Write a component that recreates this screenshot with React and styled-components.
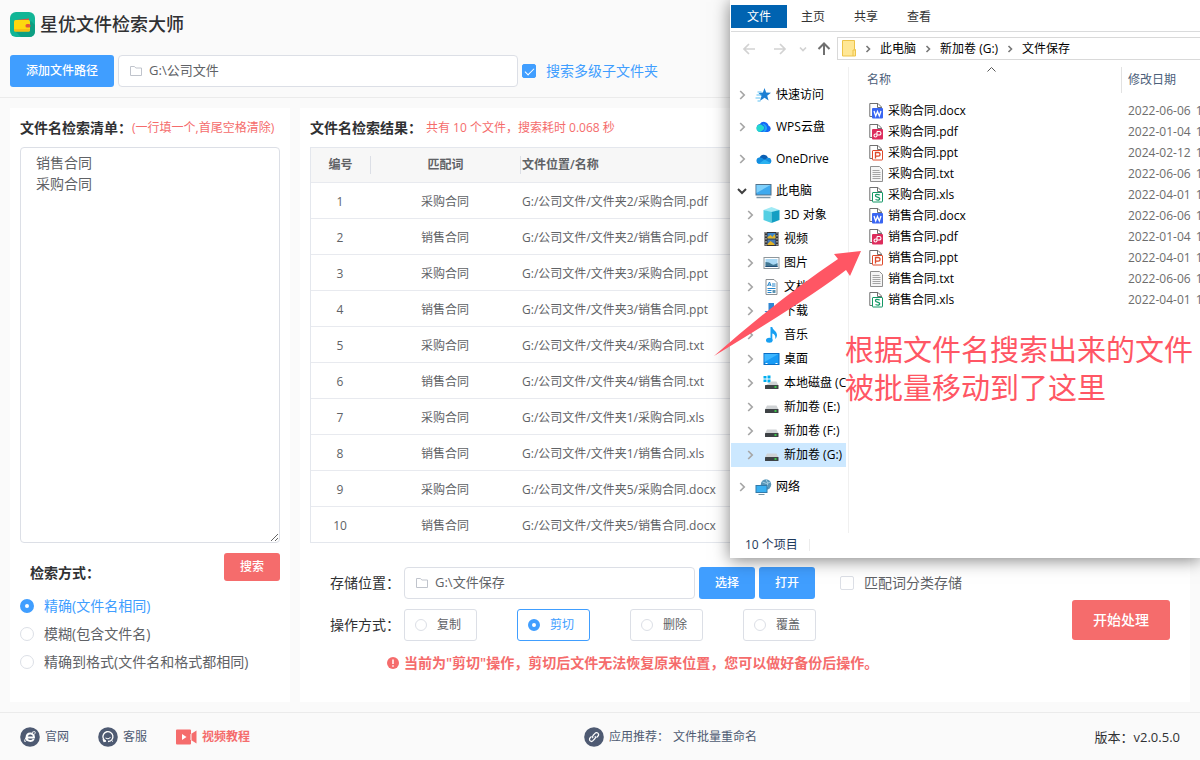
import React from "react";
import styled, { createGlobalStyle, css } from "styled-components";

const GlobalStyle = createGlobalStyle`
  * { box-sizing: border-box; }
  body {
    margin: 0;
    background: #fafafa;
    color: #606266;
    font-family: "Open Sans", "Noto Sans CJK SC", sans-serif;
    font-size: 12px;
    line-height: 20px;
  }
  button, input, textarea { font: inherit; color: inherit; margin: 0; }
  a { color: inherit; text-decoration: none; }
`;

const Page = styled.div`
  position: relative;
  display: flex;
  flex-direction: column;
  min-height: 100vh;
  overflow: hidden;
`;

const TopBar = styled.header`
  display: flex;
  flex-direction: column;
  gap: 18px;
  padding: 12px 10px 10px;
  border-bottom: 1px solid #ebebeb;
`;

const Brand = styled.div`
  display: flex;
  align-items: center;
  gap: 5px;
  height: 25px;
`;

const Title = styled.h1`
  margin: 0;
  padding-bottom: 2px;
  font-size: 18px;
  font-weight: 500;
  line-height: 24px;
  color: #303133;
`;

const Toolbar = styled.div`
  display: flex;
  align-items: center;
  gap: 4px;
`;

const buttonColors = { primary: "#409eff", danger: "#f56c6c" };

const Button = styled.button`
  border: 0;
  border-radius: 3px;
  color: #fff;
  background: ${(p) => buttonColors[p.$kind]};
  font-size: ${(p) => (p.$size === "large" ? 14 : 12)}px;
  font-weight: 500;
  height: ${(p) => ({ small: 28, medium: 32, large: 40 })[p.$size]}px;
  padding: 0 ${(p) => (p.$size === "large" ? 21 : 16)}px;
  white-space: nowrap;
`;

const PathBox = styled.label`
  display: flex;
  align-items: center;
  gap: 7px;
  width: ${(p) => p.$width}px;
  height: 32px;
  padding: 0 11px;
  border: 1px solid #dcdfe6;
  border-radius: 4px;
  background: #fff;
`;

const PathInput = styled.input`
  flex: 1;
  min-width: 0;
  padding: 0 0 2px;
  border: 0;
  outline: 0;
  background: transparent;
  font-size: 13px;
`;

const Choice = styled.label`
  display: flex;
  align-items: center;
  gap: 10px;
  font-size: 14px;
  white-space: nowrap;
  color: ${(p) => (p.$on ? "#409eff" : "#606266")};
`;

const SearchChoice = styled(Choice)`
  height: 28px;
`;

const MatchChoice = styled(Choice)`
  margin-left: 21px;
`;

const Check = styled.input`
  appearance: none;
  display: grid;
  place-items: center;
  width: 14px;
  height: 14px;
  border: 1px solid #dcdfe6;
  border-radius: 2px;
  background: #fff;
  &:checked {
    border-color: #409eff;
    background: #409eff;
  }
  &:checked::after {
    content: "";
    width: 4px;
    height: 8px;
    margin-bottom: 2px;
    border: solid #fff;
    border-width: 0 1px 1px 0;
    transform: rotate(45deg);
  }
`;

const Radio = styled.input`
  appearance: none;
  width: ${(p) => p.$size}px;
  height: ${(p) => p.$size}px;
  border: 1px solid #dcdfe6;
  border-radius: 50%;
  background: #fff;
  &:checked {
    border: ${(p) => (p.$size > 12 ? 5 : 4)}px solid #409eff;
  }
`;

const Main = styled.main`
  flex: 1;
  display: flex;
  gap: 10px;
  padding: 10px;
`;

const Panel = styled.section`
  display: flex;
  flex-direction: column;
  background: #fff;
  padding: 10px 10px 26px;
`;

const ListPanel = styled(Panel)`
  flex: 0 0 280px;
`;

const ResultPanel = styled(Panel)`
  flex: 1;
  min-width: 0;
  padding-bottom: 29px;
`;

const PanelHead = styled.div`
  display: flex;
  align-items: center;
  margin-bottom: 9px;
  white-space: nowrap;
`;

const Heading = styled.h2`
  margin: 0;
  font-size: 14px;
  font-weight: 600;
  line-height: 20px;
  color: #303133;
`;

const Hint = styled.span`
  color: #f56c6c;
  margin-left: ${(p) => p.$gap || 0}px;
`;

const NameList = styled.textarea`
  flex: 1;
  width: 100%;
  min-height: 396px;
  padding: 4px 15px;
  border: 1px solid #dcdfe6;
  border-radius: 4px;
  outline: 0;
  resize: vertical;
  background: #fff;
  font-size: 14px;
  line-height: 21px;
`;

const SearchRow = styled.div`
  display: flex;
  justify-content: space-between;
  margin: 10px 0 9px;
  padding-left: 10px;
  ${Heading} { padding-top: 10px; }
`;

const TableBox = styled.div`
  flex: 1 0 396px;
  height: 396px;
  overflow: hidden;
  border: 1px solid #e4e7ed;
`;

const ResultTable = styled.table`
  width: 100%;
  border-collapse: separate;
  border-spacing: 0;
  table-layout: fixed;
  col:nth-child(1) { width: 60px; }
  col:nth-child(2) { width: 150px; }
  th, td {
    height: 36px;
    padding: 0;
    border-bottom: 1px solid #e8eaef;
    text-align: center;
  }
  td { padding: 2px 2px 0 0; }
  th {
    height: 35px;
    background: #f7f7f7;
    font-weight: 600;
  }
  th:nth-child(3), td:nth-child(3) {
    text-align: left;
    padding-left: 1px;
  }
`;

const HeadLabel = styled.div`
  line-height: 18px;
  border-right: ${(p) => (p.$last ? "0" : "1px solid #dcdfe6")};
`;

const Form = styled.form`
  display: flex;
  align-items: center;
  justify-content: space-between;
  margin-top: 24px;
  padding: 0 10px 0 20px;
`;

const FormRow = styled.div`
  display: flex;
  align-items: center;
  gap: ${(p) => p.$gap}px;
  margin-bottom: 10px;
`;

const FormLabel = styled.span`
  width: ${(p) => p.$width}px;
  font-size: 14px;
  color: #303133;
  white-space: nowrap;
`;

const Modes = styled.div`
  display: flex;
  gap: 40px;
`;

const Mode = styled.label`
  display: flex;
  align-items: center;
  gap: 10px;
  width: 73px;
  height: 32px;
  padding-left: 10px;
  border: 1px solid ${(p) => (p.$on ? "#409eff" : "#dcdfe6")};
  border-radius: 3px;
  color: ${(p) => (p.$on ? "#409eff" : "#606266")};
`;

const Warning = styled.p`
  display: flex;
  align-items: center;
  gap: 5px;
  margin: 12px 0 0;
  padding-left: 57px;
  color: #f56c6c;
  font-size: 14px;
  font-weight: 600;
  white-space: nowrap;
`;

const Footer = styled.footer`
  display: flex;
  align-items: center;
  justify-content: space-between;
  height: 48px;
  padding: 0 20px;
  border-top: 1px solid #ebebeb;
`;

const FootGroup = styled.nav`
  display: flex;
  align-items: center;
  gap: ${(p) => p.$gap}px;
  flex: ${(p) => p.$flex || "0 0 auto"};
  justify-content: ${(p) => p.$align || "flex-start"};
`;

const FootLink = styled.a`
  display: flex;
  align-items: center;
  gap: 5px;
  color: ${(p) => (p.$hot ? "#f56c6c" : "#4e5a72")};
  font-weight: ${(p) => (p.$hot ? 600 : 400)};
`;

const Version = styled.span`
  font-size: 13px;
  color: #303133;
`;

/* File manager window floating over the application */
const Explorer = styled.aside`
  position: absolute;
  top: 0;
  left: 730px;
  right: 0;
  display: flex;
  flex-direction: column;
  height: 558px;
  padding-left: 1px;
  background: #fff;
  color: #000;
  box-shadow: 0 2px 16px rgba(0, 0, 0, 0.5);
`;

const Tabs = styled.div`
  display: flex;
  padding: 5px 0 3px;
  border-bottom: 1px solid #dadbdc;
`;

const Tab = styled.button`
  border: 0;
  height: 23px;
  padding: ${(p) => (p.$on ? "0 16px" : "0 15px 0 14px")};
  color: ${(p) => (p.$on ? "#fff" : "#333")};
  background: ${(p) => (p.$on ? "#0063b1" : "transparent")};
`;

const AddressRow = styled.div`
  display: flex;
  align-items: center;
  padding-top: 5px;
`;

const NavButtons = styled.div`
  display: flex;
  width: 106px;
  padding-left: 11px;
`;

const Address = styled.div`
  flex: 1;
  display: flex;
  align-items: center;
  gap: 8px;
  height: 23px;
  padding-left: 4px;
  border: 1px solid #d9d9d9;
  border-right: 0;
  white-space: nowrap;
`;

const Body = styled.div`
  display: flex;
  margin-top: 7px;
  height: 466px;
`;

const Tree = styled.ul`
  flex: 0 0 118px;
  min-width: 0;
  margin: 0;
  padding: 16px 2px 0 0;
  border-right: 1px solid #f0f0f0;
  list-style: none;
`;

const TreeItem = styled.li`
  display: flex;
  align-items: center;
  height: 24px;
  margin-top: ${(p) => (p.$gap ? 8 : 0)}px;
  padding-left: ${(p) => (p.$child ? 14 : 6)}px;
  background: ${(p) => (p.$on ? "#cce8ff" : "transparent")};
  white-space: nowrap;
  overflow: hidden;
  svg { flex: none; }
  span { margin-left: 4px; }
`;

const Arrow = styled.svg`
  width: 10px;
  height: 10px;
  margin-right: ${(p) => p.$space || 0}px;
`;

const FileTable = styled.table`
  flex: 1;
  align-self: flex-start;
  border-spacing: 0;
  table-layout: fixed;
  width: 0;
  min-width: 0;
  col:nth-child(1) { width: 273px; }
  th {
    height: 33px;
    padding: 0;
    font-weight: 400;
    text-align: left;
    color: #4c607a;
    vertical-align: top;
  }
  td {
    height: 21px;
    padding: 0 0 0 20px;
    white-space: nowrap;
    overflow: hidden;
  }
  td + td { padding-left: 6px; color: #6d6d6d; }
  td + td span { margin-left: 5px; }
`;

const ColumnHead = styled.div`
  display: flex;
  justify-content: space-between;
  height: 26px;
  line-height: 26px;
  padding-left: ${(p) => (p.$first ? 18 : 6)}px;
  ${(p) => p.$first && css`border-right: 1px solid #e2e2e2;`}
`;

const SortMark = styled.svg`
  width: 9px;
  height: 5px;
  margin-right: 125px;
`;

const FileName = styled.div`
  display: flex;
  align-items: center;
  gap: 4px;
  line-height: 21px;
`;

const Status = styled.div`
  width: 65px;
  margin: 6px 0 0 14px;
  line-height: 12px;
  border-right: 1px solid #ececec;
  color: #1e395b;
`;

const Callout = styled.p`
  position: absolute;
  top: 331px;
  left: 845px;
  margin: 0;
  color: #ff5664;
  font-size: 29px;
  line-height: 38px;
  white-space: nowrap;
`;

const Pointer = styled.svg`
  position: absolute;
  top: 240px;
  left: 710px;
  width: 160px;
  height: 120px;
`;

const Logo = () => (
  <svg width="25" height="25" viewBox="0 0 25 25">
    <rect width="25" height="25" rx="6" fill="#11b596" />
    <path d="M21 9 25 13V19Q25 25 19 25H11L5 19Z" fill="#0d9f83" />
    <path d="M6 8 19 6.500V9H5Z" fill="#e5533c" />
    <rect x="4" y="8" width="16" height="11.500" rx="1.500" fill="#fdd80f" />
    <path d="M4 17h16v1a1.500 1.500 0 0 1-1.500 1.500h-13A1.500 1.500 0 0 1 4 18z" fill="#f7bd12" />
    <rect x="15.500" y="12" width="5" height="3.500" rx="1.500" fill="#e5533c" />
  </svg>
);

const FolderOutline = () => (
  <svg width="12" height="12" viewBox="0 0 12 12" fill="none" stroke="#c0c4cc">
    <path d="M.5 1.500h4l1.300 1.500h5.700v7.500H.5z" />
  </svg>
);

const Chevron = ({ open, color, space }) => (
  <Arrow $space={space} viewBox="0 0 10 10" fill="none" stroke={color || (open ? "#404040" : "#a6a6a6")} strokeWidth={open ? 2 : 1.700}>
    <path d={open ? "M1 3l4 4 4-4" : "M3.200 1l4 4-4 4"} />
  </Arrow>
);

const Crumb = () => (
  <svg width="8" height="8" viewBox="0 0 8 8" fill="none" stroke="#777" strokeWidth="1.600">
    <path d="M2.500 1l3 3-3 3" />
  </svg>
);

const Drive = ({ windows }) => (
  <>
    {windows && <path d="M0 1h3v2.500H0zM4 .5h3v3H4zM0 4.500h3V7H0zM4 4.500h3v3H4z" fill="#00adef" />}
    <path d={windows ? "M8 6.500h5l2 4H2z" : "M3.500 6.500h9.500l2 4H1.500z"} fill="#cfd2d4" />
    <rect x="1.500" y="10" width="13.500" height="4" rx=".5" fill="#3e4245" />
    <path d="M11 12h2" stroke="#3df04a" strokeWidth="1.500" />
  </>
);

const treeArt = {
  star: (
    <>
      <path d="M9 1l1.700 4.600 4.800.2-3.800 3 1.400 4.800L9 10.800l-4.500 3 1.500-4.900L3 6l4.400-.4z" fill="#1d7fd3" />
      <path d="M1 8h5M0 11h5M2 14h3M2 5h4" stroke="#5fc2f4" strokeWidth="1.200" />
    </>
  ),
  cloud: (
    <>
      <path d="M5 13a4 4 0 0 1-.6-7.900A4.700 4.700 0 0 1 13 6.500a3.400 3.400 0 0 1-.5 6.500z" fill="#1468f5" />
      <path d="M4.500 13a3.700 3.700 0 1 1 3-6c2.500 1 1 5-3 6z" fill="#25d8ce" />
      <path d="M7 5.500c3 1 3 5 0 7.500h2c4-2 3-7-1-8.500z" fill="#20a8f5" />
    </>
  ),
  onedrive: (
    <>
      <path d="M4 7a4.500 4.500 0 0 1 8.500-.6L9 10z" fill="#0a5fb4" />
      <path d="M3.500 13A3.300 3.300 0 0 1 4 6.500c2 0 3.500.8 5 2.500l3-2a3 3 0 0 1 1.500 6z" fill="#138ee0" />
      <path d="M3 13l6-4.500 6 3.500q-.8 1-2 1z" fill="#2ab1f0" />
    </>
  ),
  pc: (
    <>
      <rect x=".5" y="1.500" width="15" height="10.500" fill="#3fa9ee" stroke="#52718a" />
      <path d="M1 2h14L1 10z" fill="#7fd0fb" />
      <path d="M1 14.500h14" stroke="#7d97a8" strokeWidth="1.500" />
    </>
  ),
  cube: (
    <>
      <path d="M0 3l8-3 8 3-8 3z" fill="#a0eaf5" />
      <path d="M0 3l8 2v11l-8-3z" fill="#54cfe3" />
      <path d="M16 3l-8 2v11l8-3z" fill="#139fc3" />
    </>
  ),
  video: (
    <>
      <rect x="1" y="1" width="14" height="14" fill="#333" />
      <rect x="4" y="2" width="8" height="5.500" fill="#3d85c9" />
      <rect x="4" y="8.500" width="8" height="5.500" fill="#4779b4" />
      <path d="M4 6l3-2 2 2 2-3 1 3v1.500H4zM4 13l3-3 4 3v1H4z" fill="#e5b425" />
      <path d="M2.500 1v14M13.500 1v14" stroke="#ddd" strokeDasharray="1.500 1.500" />
    </>
  ),
  image: (
    <>
      <rect x=".5" y="2.500" width="15" height="11" fill="#fff" stroke="#8e979c" />
      <rect x="2" y="4" width="12" height="8" fill="#a9d8f4" />
      <path d="M2 7q4 0 6 2t6-1v4H2z" fill="#427793" />
      <path d="M2 11h12v1H2z" fill="#234f79" />
    </>
  ),
  doc: (
    <>
      <path d="M2.500.5h8l3 3v12h-11z" fill="#fff" stroke="#8a8f93" />
      <path d="M4 7l2-4 1.500 4M4.500 6H7M8.500 5H12M8.500 7H12M4 9.500h8M4 11.500h4M4 13.500h4" stroke="#2384ca" fill="none" />
      <path d="M9 11h3v3H9z" fill="#5a92b1" />
    </>
  ),
  download: <path d="M5 0h5.500v8H14l-6 7-7-7h4z" fill="#2f86d4" />,
  music: (
    <>
      <path d="M7 0h1.800c.2 3 4.700 4.200 4.700 8 0 1.700-.7 3-1.700 4 .5-3.500-.8-5-3-5.500V13H7z" fill="#18a0f2" />
      <ellipse cx="5.800" cy="13.200" rx="3.300" ry="2.500" fill="#18a0f2" />
    </>
  ),
  desktop: (
    <>
      <rect x=".5" y="2.500" width="15" height="11" fill="#189bf5" stroke="#0a6dc3" />
      <path d="M1 3h14L1 11z" fill="#3db6ff" />
      <path d="M2 12.500h2M12 12.500h2" stroke="#fff" />
    </>
  ),
  system: <Drive windows />,
  drive: <Drive />,
  network: (
    <>
      <circle cx="10.500" cy="5.500" r="5.200" fill="#5896b8" />
      <path d="M7 3q4 3 8 0M10.500 0q3 5 1 8" stroke="#a6d0e4" fill="none" />
      <rect x=".5" y="6.500" width="11" height="7" fill="#3ab0f1" stroke="#337aa9" />
      <path d="M3 15.500h6" stroke="#7594a5" />
    </>
  ),
};

const TreeIcon = ({ name }) => (
  <svg width="17" height="16" viewBox="0 0 16 16">{treeArt[name]}</svg>
);

const fileArt = {
  docx: (
    <>
      <rect x="3" y="5" width="11" height="10.500" rx="1" fill="#3965f2" />
      <path d="M5 8l1.700 5L8.500 8.500 10.300 13 12 8" stroke="#fff" strokeWidth="1.300" fill="none" />
    </>
  ),
  pdf: (
    <>
      <rect x="3" y="5" width="11" height="10.500" rx="1" fill="#dd2c5c" />
      <path d="M8 7.500h2.200a1.700 1.700 0 0 1 0 3.500H8v-3.500M8 10.500v1a1.500 1.500 0 1 1-1.500-1.500H8" stroke="#fff" strokeWidth="1.100" fill="none" />
    </>
  ),
  ppt: (
    <>
      <rect x="3.500" y="5.500" width="10" height="9.500" rx=".5" fill="#fff" stroke="#de4a2b" />
      <path d="M6.500 13.500v-6h2.700a1.700 1.700 0 0 1 0 3.700H6.500" stroke="#de4a2b" strokeWidth="1.300" fill="none" />
    </>
  ),
  xls: (
    <>
      <rect x="3.500" y="5.500" width="10" height="9.500" rx=".5" fill="#fff" stroke="#149866" />
      <path d="M10.800 8Q6.500 6.500 6.500 8.700q0 1 2 1.500t2.200 1.500q0 2.200-4.200.8" stroke="#149866" strokeWidth="1.300" fill="none" />
    </>
  ),
};

const FileIcon = ({ type }) => (
  <svg width="15" height="16" viewBox="0 0 15 16">
    {type === "txt" ? (
      <>
        <path d="M1.500.5h9l3 3v12h-12z" fill="#f5f5f5" stroke="#8f8f8f" />
        <path d="M3.500 4.500h7M3.500 6.500h8M3.500 8.500h8M3.500 10.500h8M3.500 12.500h8" stroke="#a5a5a5" />
      </>
    ) : (
      <>
        <path d="M3 13.500H.8V.5H9l3.500 3.500v2M8.500.5v4h4" fill="#fff" stroke="#707070" />
        {fileArt[type]}
      </>
    )}
  </svg>
);

const Disc = ({ children }) => (
  <svg width="20" height="20" viewBox="0 0 20 20" fill="none" stroke="#fff">
    <circle cx="10" cy="10" r="9.800" fill="#4e5a72" stroke="none" />
    {children}
  </svg>
);

const results = [
  ["采购合同", "文件夹2/采购合同.pdf"],
  ["销售合同", "文件夹2/销售合同.pdf"],
  ["采购合同", "文件夹3/采购合同.ppt"],
  ["销售合同", "文件夹3/销售合同.ppt"],
  ["采购合同", "文件夹4/采购合同.txt"],
  ["销售合同", "文件夹4/销售合同.txt"],
  ["采购合同", "文件夹1/采购合同.xls"],
  ["销售合同", "文件夹1/销售合同.xls"],
  ["采购合同", "文件夹5/采购合同.docx"],
  ["销售合同", "文件夹5/销售合同.docx"],
];

const files = [
  ["采购合同", "docx", "2022-06-06"],
  ["采购合同", "pdf", "2022-01-04"],
  ["采购合同", "ppt", "2024-02-12"],
  ["采购合同", "txt", "2022-06-06"],
  ["采购合同", "xls", "2022-04-01"],
  ["销售合同", "docx", "2022-06-06"],
  ["销售合同", "pdf", "2022-01-04"],
  ["销售合同", "ppt", "2022-04-01"],
  ["销售合同", "txt", "2022-06-06"],
  ["销售合同", "xls", "2022-04-01"],
];

const tree = [
  { icon: "star", name: "快速访问" },
  { icon: "cloud", name: "WPS云盘", gap: true },
  { icon: "onedrive", name: "OneDrive", gap: true },
  { icon: "pc", name: "此电脑", gap: true, open: true },
  { icon: "cube", name: "3D 对象", child: true },
  { icon: "video", name: "视频", child: true },
  { icon: "image", name: "图片", child: true },
  { icon: "doc", name: "文档", child: true },
  { icon: "download", name: "下载", child: true },
  { icon: "music", name: "音乐", child: true },
  { icon: "desktop", name: "桌面", child: true },
  { icon: "system", name: "本地磁盘 (C:)", child: true },
  { icon: "drive", name: "新加卷 (E:)", child: true },
  { icon: "drive", name: "新加卷 (F:)", child: true },
  { icon: "drive", name: "新加卷 (G:)", child: true, on: true },
  { icon: "network", name: "网络", gap: true },
];

const searchModes = ["精确(文件名相同)", "模糊(包含文件名)", "精确到格式(文件名和格式都相同)"];
const actions = ["复制", "剪切", "删除", "覆盖"];

function ExplorerWindow() {
  return (
    <Explorer>
      <Tabs>
        {["文件", "主页", "共享", "查看"].map((t, i) => (
          <Tab key={t} type="button" $on={i === 0}>{t}</Tab>
        ))}
      </Tabs>
      <AddressRow>
        <NavButtons>
          <svg width="90" height="16" viewBox="0 0 90 16" fill="none" strokeWidth="1.700" stroke="#d2d2d2">
            <path d="M13 8H2M7 3L2 8l5 5M32 8h11M38 3l5 5-5 5M58 6.500l3 3 3-3" />
            <path d="M82 14V3M76.500 8L82 2.500 87.500 8" stroke="#707070" strokeWidth="2" />
          </svg>
        </NavButtons>
        <Address>
          <svg width="14" height="17" viewBox="0 0 14 17">
            <path d="M.5.5h12v9h1v6.500H.5z" fill="#ffe795" stroke="#edc349" />
            <path d="M11 16V10h2" stroke="#edc349" fill="none" />
          </svg>
          <Crumb />
          <span>此电脑</span>
          <Crumb />
          <span>新加卷 (G:)</span>
          <Crumb />
          <span>文件保存</span>
        </Address>
      </AddressRow>
      <Body>
        <Tree>
          {tree.map((n) => (
            <TreeItem key={n.name} $child={n.child} $gap={n.gap} $on={n.on}>
              <Chevron open={n.open} space={8} />
              <TreeIcon name={n.icon} />
              <span>{n.name}</span>
            </TreeItem>
          ))}
        </Tree>
        <FileTable>
          <colgroup><col /><col /></colgroup>
          <thead>
            <tr>
              <th>
                <ColumnHead $first>
                  名称
                  <SortMark viewBox="0 0 9 5" fill="none" stroke="#555"><path d="M.5 4.500l4-4 4 4" /></SortMark>
                </ColumnHead>
              </th>
              <th><ColumnHead>修改日期</ColumnHead></th>
            </tr>
          </thead>
          <tbody>
            {files.map(([name, type, date]) => (
              <tr key={name + type}>
                <td><FileName><FileIcon type={type} />{name}.{type}</FileName></td>
                <td>{date}<span>1</span></td>
              </tr>
            ))}
          </tbody>
        </FileTable>
      </Body>
      <Status>10 个项目</Status>
    </Explorer>
  );
}

export default function App() {
  return (
    <Page>
      <GlobalStyle />
      <TopBar>
        <Brand><Logo /><Title>星优文件检索大师</Title></Brand>
        <Toolbar>
          <Button type="button" $kind="primary" $size="medium">添加文件路径</Button>
          <PathBox $width={400}>
            <FolderOutline />
            <PathInput aria-label="文件路径" defaultValue={"G:\\公司文件"} />
          </PathBox>
          <Choice $on><Check type="checkbox" defaultChecked />搜索多级子文件夹</Choice>
        </Toolbar>
      </TopBar>

      <Main>
        <ListPanel>
          <PanelHead>
            <Heading as="label" htmlFor="names">文件名检索清单：</Heading>
            <Hint>(一行填一个,首尾空格清除)</Hint>
          </PanelHead>
          <NameList id="names" defaultValue={"销售合同\n采购合同"} />
          <SearchRow>
            <Heading>检索方式：</Heading>
            <Button type="button" $kind="danger" $size="small">搜索</Button>
          </SearchRow>
          {searchModes.map((m, i) => (
            <SearchChoice key={m} $on={i === 0}>
              <Radio type="radio" name="search" $size={14} defaultChecked={i === 0} />
              {m}
            </SearchChoice>
          ))}
        </ListPanel>

        <ResultPanel>
          <PanelHead>
            <Heading>文件名检索结果：</Heading>
            <Hint $gap={4}>共有 10 个文件，搜索耗时 0.068 秒</Hint>
          </PanelHead>
          <TableBox>
            <ResultTable>
              <colgroup><col /><col /><col /></colgroup>
              <thead>
                <tr>
                  <th><HeadLabel>编号</HeadLabel></th>
                  <th><HeadLabel>匹配词</HeadLabel></th>
                  <th><HeadLabel $last>文件位置/名称</HeadLabel></th>
                </tr>
              </thead>
              <tbody>
                {results.map(([word, path], i) => (
                  <tr key={path}>
                    <td>{i + 1}</td>
                    <td>{word}</td>
                    <td>G:/公司文件/{path}</td>
                  </tr>
                ))}
              </tbody>
            </ResultTable>
          </TableBox>
          <Form>
            <div>
              <FormRow $gap={4}>
                <FormLabel as="label" htmlFor="target" $width={70}>存储位置：</FormLabel>
                <PathBox $width={291}>
                  <FolderOutline />
                  <PathInput id="target" defaultValue={"G:\\文件保存"} />
                </PathBox>
                <Button type="button" $kind="primary" $size="medium">选择</Button>
                <Button type="button" $kind="primary" $size="medium">打开</Button>
                <MatchChoice><Check type="checkbox" />匹配词分类存储</MatchChoice>
              </FormRow>
              <FormRow $gap={4}>
                <FormLabel $width={70}>操作方式：</FormLabel>
                <Modes>
                  {actions.map((a, i) => (
                    <Mode key={a} $on={i === 1}>
                      <Radio type="radio" name="action" $size={12} defaultChecked={i === 1} />
                      {a}
                    </Mode>
                  ))}
                </Modes>
              </FormRow>
              <Warning>
                <svg width="12" height="12" viewBox="0 0 12 12">
                  <circle cx="6" cy="6" r="6" fill="#f56c6c" />
                  <path d="M6 2.500v4.500M6 8.300v1.500" stroke="#fff" strokeWidth="1.500" />
                </svg>
                当前为"剪切"操作，剪切后文件无法恢复原来位置，您可以做好备份后操作。
              </Warning>
            </div>
            <Button type="submit" $kind="danger" $size="large">开始处理</Button>
          </Form>
        </ResultPanel>
      </Main>

      <Footer>
        <FootGroup $gap={29} $flex="4">
          <FootLink href="#site">
            <Disc>
              <path d="M6.300 10.500h7.700c.2-5-7.200-5.500-7.500 0-.1 4 6 4.500 7.200 1.500" strokeWidth="1.900" />
              <path d="M6.500 13.500c-3 3-2.500-1 1.500-5M12 5.500c3.500-2 4-.5 2.300 2" />
            </Disc>
            官网
          </FootLink>
          <FootLink href="#support">
            <Disc>
              <path d="M7.500 14A5 5 0 1 1 14 12.500c-.8 1.300-2.500 2-4 2M5 12l1 2.500 2-.5" strokeWidth="1.300" />
              <path d="M13.500 13.500l1.500 1M7.500 11q2.500 2 5-.5" />
            </Disc>
            客服
          </FootLink>
          <FootLink href="#video" $hot>
            <svg width="21" height="16" viewBox="0 0 21 16">
              <path d="M1 .5h13a1 1 0 0 1 1 1V5l5.500-3.500v13L15 11v3.500a1 1 0 0 1-1 1H1a1 1 0 0 1-1-1v-13a1 1 0 0 1 1-1z" fill="#f56c6c" />
              <path d="M6 5l4.500 3L6 11z" fill="#fff" />
              <path d="M15 5v6" stroke="#fafafa" />
            </svg>
            视频教程
          </FootLink>
        </FootGroup>
        <FootGroup $gap={4}>
          <FootLink as="span">
            <Disc>
              <path d="M9 11a2 2 0 0 1 0-2.500L11 6.300a2 2 0 0 1 3 2.700l-1.500 1.700M11 9a2 2 0 0 1 0 2.500L9 13.700A2 2 0 0 1 6 11l1.500-1.700" strokeWidth="1.200" />
            </Disc>
            应用推荐：
          </FootLink>
          <FootLink href="#rename">文件批量重命名</FootLink>
        </FootGroup>
        <FootGroup $flex="3" $align="flex-end"><Version>版本：v2.0.5.0</Version></FootGroup>
      </Footer>

      <ExplorerWindow />
      <Pointer viewBox="0 0 160 120">
        <path d="M4 116Q70 58 128 19L124 14 151 11 140 36 136 30Q100 58 4 116Z" fill="#ff5664" />
      </Pointer>
      <Callout>根据文件名搜索出来的文件<br />被批量移动到了这里</Callout>
    </Page>
  );
}
